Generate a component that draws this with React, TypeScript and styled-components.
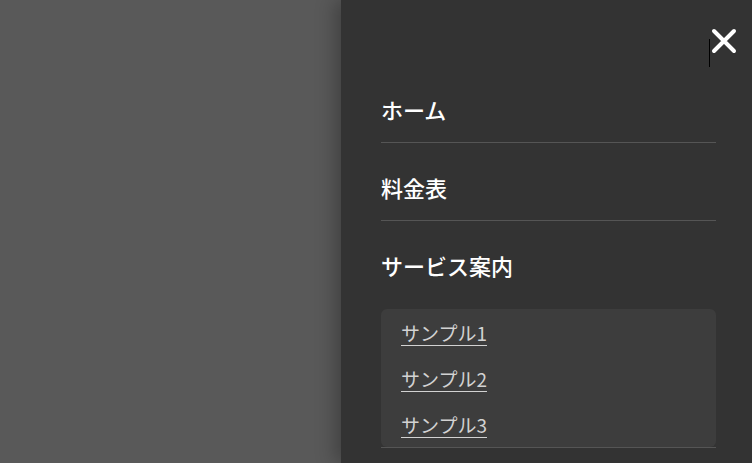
import styled, { createGlobalStyle } from "styled-components";

const GlobalStyle = createGlobalStyle`
  html, body {
    margin: 0;
    padding: 0;
    height: 100%;
    overflow: hidden;
  }
  #root {
    height: 100%;
  }
`;

const Screen = styled.div`
  display: flex;
  height: 100vh;
  background: #595959;
  font-family: "Noto Sans CJK JP", "Noto Sans", sans-serif;
`;

const Backdrop = styled.div`
  flex: 1;
`;

const Drawer = styled.nav`
  position: relative;
  width: 411px;
  box-sizing: border-box;
  padding: 65px 36px 0 40px;
  background: #333333;
  box-shadow: -6px 0 18px rgba(0, 0, 0, 0.28);
`;

const CloseButton = styled.button`
  position: absolute;
  top: 27px;
  right: 14px;
  width: 28px;
  height: 28px;
  padding: 0;
  border: none;
  background: none;
  display: flex;
  align-items: center;
  justify-content: center;
  cursor: pointer;
`;

const Caret = styled.span`
  position: absolute;
  top: 39px;
  left: 368px;
  width: 1px;
  height: 28px;
  background: #000;
`;

const MenuList = styled.ul`
  list-style: none;
  margin: 0;
  padding: 0;
`;

const MenuItem = styled.li`
  border-bottom: 1px solid #555555;
`;

const MenuLabel = styled.a`
  display: block;
  padding: 29px 0 18px;
  line-height: 30px;
  font-size: 22px;
  font-weight: 500;
  color: #ffffff;
  text-decoration: none;
`;

const SubMenu = styled.div`
  margin: 11px 0 0;
  background: #3d3d3d;
  border-radius: 6px;
  padding: 1px 20px 0;
`;

const SubLink = styled.a`
  display: block;
  line-height: 46px;
  font-size: 19px;
  color: #d2d2d2;
  text-decoration: underline;
  text-underline-offset: 4px;

  &:last-child {
    line-height: 45px;
  }
`;

const menu = [
  { label: "ホーム" },
  { label: "料金表" },
  { label: "サービス案内", children: ["サンプル1", "サンプル2", "サンプル3"] },
];

const App = () => {
  return (
    <>
      <GlobalStyle />
      <Screen>
        <Backdrop />
        <Drawer>
          <CloseButton aria-label="close">
            <svg width="26" height="26" viewBox="0 0 26 26">
              <path
                d="M3 3 L23 23 M23 3 L3 23"
                stroke="#ffffff"
                strokeWidth="4"
                strokeLinecap="round"
              />
            </svg>
          </CloseButton>
          <Caret />
          <MenuList>
            {menu.map((item) => (
              <MenuItem key={item.label}>
                <MenuLabel href="#">{item.label}</MenuLabel>
                {item.children && (
                  <SubMenu>
                    {item.children.map((c) => (
                      <SubLink href="#" key={c}>
                        {c}
                      </SubLink>
                    ))}
                  </SubMenu>
                )}
              </MenuItem>
            ))}
          </MenuList>
        </Drawer>
      </Screen>
    </>
  );
};

export default App;
